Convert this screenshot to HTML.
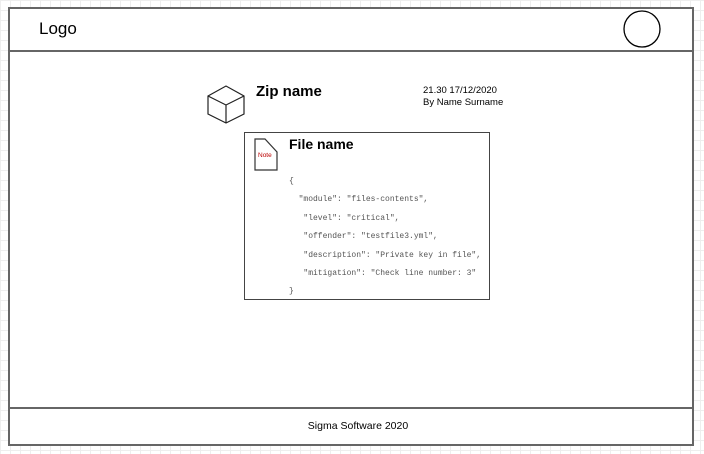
<!DOCTYPE html>
<html><head><style>
body{margin:0;width:704px;height:454px;overflow:hidden;font-family:"Liberation Sans",sans-serif;
background-color:#fff;background-image:linear-gradient(#eee 1px,transparent 1px),linear-gradient(90deg,#eee 1px,transparent 1px);background-size:10px 10px;position:relative}
.a{position:absolute}
.mono{font-family:"Liberation Mono",monospace;font-size:8px;color:#555;white-space:pre}
</style></head><body>
<div class="a" style="left:8px;top:7px;width:682px;height:435px;border:2px solid #666;background:#fff"></div>
<div class="a" style="left:8px;top:50px;width:686px;height:2px;background:#666"></div>
<div class="a" style="left:8px;top:407px;width:686px;height:2px;background:#666"></div>
<div class="a" style="left:39px;top:19px;font-size:17px">Logo</div>
<svg class="a" style="left:620px;top:8px" width="44" height="44"><circle cx="22" cy="21" r="18" fill="none" stroke="#000" stroke-width="1.3"/></svg>
<svg class="a" style="left:205px;top:82px" width="44" height="44"><path d="M3 14 L21 4 L39 14 L39 32 L21 41 L3 32 Z M3 14 L21 23 L39 14 M21 23 L21 41" fill="none" stroke="#222" stroke-width="1.2"/></svg>
<div class="a" style="left:256px;top:83px;font-size:15px;font-weight:bold">Zip name</div>
<div class="a" style="left:423px;top:85px;font-size:9.5px;line-height:12px">21.30 17/12/2020<br>By Name Surname</div>
<div class="a" style="left:244px;top:132px;width:244px;height:166px;border:1.5px solid #444;background:#fff"></div>
<svg class="a" style="left:253px;top:137px" width="26" height="36"><path d="M2 2 L12 2 L24 15 L24 33 L2 33 Z" fill="#fff" stroke="#333" stroke-width="1.2"/><text x="5" y="20" font-size="6.5" fill="#b00" font-family="Liberation Sans">Note</text></svg>
<div class="a" style="left:289px;top:136px;font-size:14px;font-weight:bold">File name</div>
<div class="a mono" style="left:289px;top:173px;line-height:18.4px">{
  "module": "files-contents",
   "level": "critical",
   "offender": "testfile3.yml",
   "description": "Private key in file",
   "mitigation": "Check line number: 3"
}</div>
<div class="a" style="left:6px;width:704px;top:420px;text-align:center;font-size:10.5px">Sigma Software 2020</div>
</body></html>
